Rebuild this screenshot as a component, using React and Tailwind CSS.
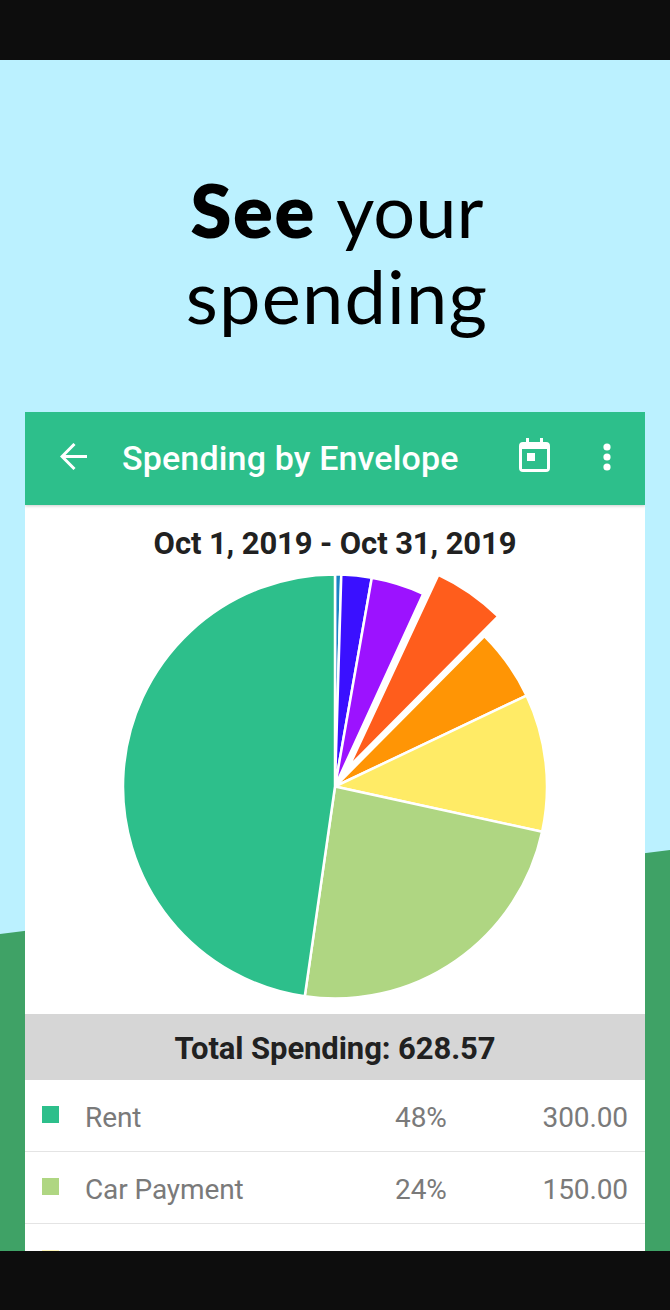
const toXY = (r, deg, ox = 0, oy = 0) => {
  const a = (deg * Math.PI) / 180
  return [335 + ox + r * Math.sin(a), 786.5 + oy - r * Math.cos(a)]
}

const slice = (from, to, ox = 0, oy = 0) => {
  const [x1, y1] = toXY(212, from, ox, oy)
  const [x2, y2] = toXY(212, to, ox, oy)
  const [cx, cy] = toXY(0, 0, ox, oy)
  const large = to - from > 180 ? 1 : 0
  return `M${cx} ${cy}L${x1} ${y1}A212 212 0 ${large} 1 ${x2} ${y2}Z`
}

const slices = [
  { from: 0, to: 1.7, color: '#1b83c4' },
  { from: 1.7, to: 10, color: '#3a10ff' },
  { from: 10, to: 24.6, color: '#9c12ff' },
  { from: 25, to: 44.8, color: '#ff5d1c', ox: 13.8, oy: -19.6 },
  { from: 44.8, to: 64.6, color: '#ff9505' },
  { from: 64.6, to: 102.3, color: '#ffeb66' },
  { from: 102.3, to: 188.2, color: '#afd682' },
  { from: 188.2, to: 360, color: '#2dbf8b' },
]

const rows = [
  { name: 'Rent', pct: '48%', amount: '300.00', color: 'bg-[#2dbf8b]' },
  { name: 'Car Payment', pct: '24%', amount: '150.00', color: 'bg-[#afd682]' },
]

const PieChart = () => (
  <svg width="620" height="453" viewBox="25 561 620 453" className="block shrink-0">
    {slices.map((s) => (
      <path key={s.from} d={slice(s.from, s.to, s.ox, s.oy)} fill={s.color} stroke="#fff" strokeWidth="2.5" strokeLinejoin="round" />
    ))}
  </svg>
)

const App = () => {
  return (
    <div className="flex h-[1310px] w-[670px] flex-col overflow-hidden bg-[#0d0d0d]">
      <div className="h-[60px] shrink-0" />

      <div className="relative h-[1191px] shrink-0 overflow-hidden bg-[#bbf1ff]">
        {/* Hill behind the card */}
        <div className="absolute inset-0 bg-[#3fa266] [clip-path:polygon(0_874px,670px_790px,670px_100%,0_100%)]" />

        <div className="relative flex h-full flex-col">
          <h1 className="mt-[107px] h-[245px] pl-[4px] text-center font-['Lato',sans-serif] text-[74px] leading-[86px] font-normal tracking-[1.2px] text-black">
            <span className="font-extrabold tracking-[1.6px]">See</span> <span className="tracking-[0px]">your</span>
            <br />
            spending
          </h1>

          <div className="mx-[25px] flex flex-1 flex-col overflow-hidden bg-white font-['Roboto',sans-serif]">
            <div className="relative flex h-[93px] shrink-0 items-center bg-[#2dbf8b] text-white shadow-[0_1px_3px_rgba(0,0,0,0.2)]">
              <svg width="27" height="27" viewBox="0 0 27 27" fill="none" stroke="currentColor" strokeWidth="3" className="mb-[4px] ml-[35px]">
                <path d="M27 13.5H2M14.5 1 2 13.5 14.5 26" />
              </svg>
              <span className="ml-[35px] text-[34px] font-medium tracking-[0.15px] whitespace-nowrap">Spending by Envelope</span>
              <svg width="31" height="34" viewBox="0 0 31 34" fill="currentColor" className="mb-[7px] ml-auto">
                <path fillRule="evenodd" d="M7 0h3v4h11V0h3v4h3a4 4 0 0 1 4 4v22a4 4 0 0 1-4 4H4a4 4 0 0 1-4-4V8a4 4 0 0 1 4-4h3V0ZM3 11v20h25V11H3Zm5 4h8v8H8v-8Z" />
              </svg>
              <svg width="8" height="28" viewBox="0 0 8 28" fill="currentColor" className="mr-[34px] mb-[3px] ml-[53px]">
                <circle cx="4" cy="4" r="3.6" />
                <circle cx="4" cy="14" r="3.6" />
                <circle cx="4" cy="24" r="3.6" />
              </svg>
            </div>

            <div className="mt-[21px] h-[35px] shrink-0 text-center text-[31px] leading-[36px] font-bold tracking-[-0.1px] text-[#212121]">Oct 1, 2019 - Oct 31, 2019</div>
            <PieChart />
            <div className="flex h-[66px] shrink-0 items-center justify-center bg-[#d6d6d6] pt-[4px] text-[31px] font-bold tracking-[-0.08px] text-[#212121]">Total Spending: 628.57</div>

            {rows.map((row) => (
              <div key={row.name} className="flex h-[72px] shrink-0 items-start border-b border-[#e4e4e4] px-[17px] text-[28px] leading-[36px] tracking-[-0.1px] text-[#7a7a7a]">
                <div className={`mt-[26px] h-[17px] w-[17px] ${row.color}`} />
                <span className="mt-[20px] ml-[26px] flex-1">{row.name}</span>
                <span className="mt-[20px] w-[51px] text-right">{row.pct}</span>
                <span className="mt-[20px] w-[182px] text-right">{row.amount}</span>
              </div>
            ))}
            <div className="mt-[26px] ml-[17px] h-[17px] w-[17px] shrink-0 bg-[#fff6b8]" />
          </div>
        </div>
      </div>

      <div className="flex-1" />
    </div>
  )
}

export default App
